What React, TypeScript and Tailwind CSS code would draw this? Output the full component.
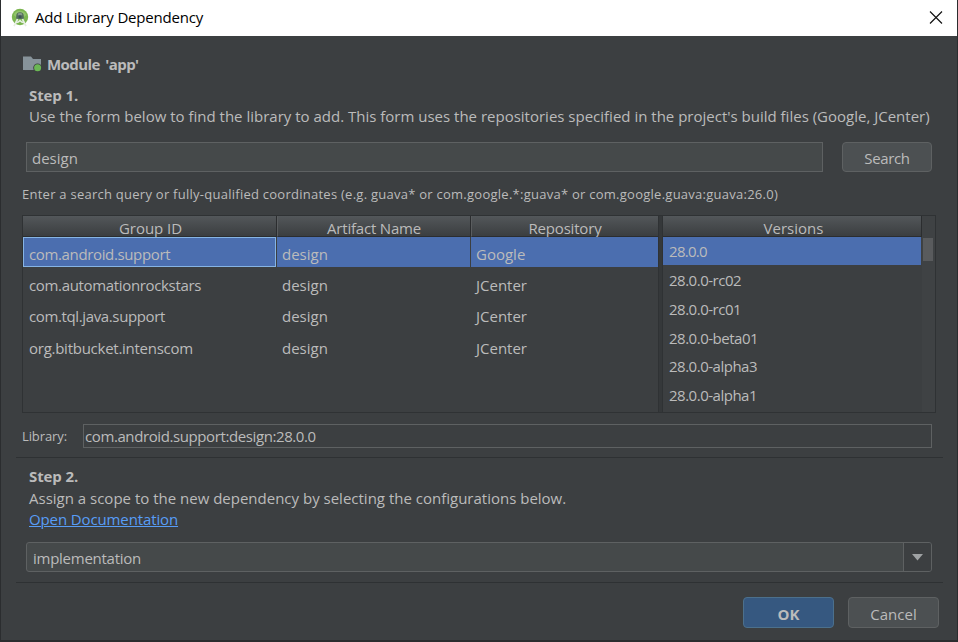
import type { ReactNode } from "react";

type Row = { group: string; artifact: string; repo: string; tracking: string; height: string };

const rows: Row[] = [
  { group: "com.automationrockstars", artifact: "design", repo: "JCenter", tracking: "tracking-[-0.34px]", height: "h-[31px]" },
  { group: "com.tql.java.support", artifact: "design", repo: "JCenter", tracking: "tracking-[-0.37px]", height: "h-[31px]" },
  { group: "org.bitbucket.intenscom", artifact: "design", repo: "JCenter", tracking: "tracking-[-0.26px]", height: "h-[32px]" },
];

const versions = [
  { name: "28.0.0-rc02", height: "h-[29px]" },
  { name: "28.0.0-rc01", height: "h-[29px]" },
  { name: "28.0.0-beta01", height: "h-[29px]" },
  { name: "28.0.0-alpha3", height: "h-[28px]" },
  { name: "28.0.0-alpha1", height: "h-[29px]" },
];

function HeaderCell({ className, children }: { className: string; children: ReactNode }) {
  return (
    <div className={`flex h-[21px] items-center justify-center border-b border-[#2b2d2f] bg-linear-to-b from-[#53575a] to-[#3b3e40] pt-[3px] leading-5 ${className}`}>
      {children}
    </div>
  );
}

function Divider() {
  return <div className="ml-[15px] h-px w-[927px] shrink-0 bg-[#2e3133]" />;
}

function StudioLogo() {
  return (
    <svg className="h-[20px] w-[18px]" viewBox="0 0 18 20">
      <circle cx="9" cy="9" r="8.2" fill="#7cb650" />
      <path d="M2.6 7A7 7 0 0 1 15.4 7L13 9H5Z" fill="#93c56c" />
      <path d="M5.2 8a3.8 3.8 0 0 1 7.6 0v3H5.2Z" fill="#55705c" />
      <path d="M6.6 7.2a2.4 2.4 0 0 1 4.8 0Z" fill="#87988c" />
      <circle cx="9" cy="8.7" r="1.5" fill="#3f5158" />
      <path d="M6.6 11 3 18.2M11.4 11 15 18.2" fill="none" stroke="#e6eee2" strokeWidth="1.7" />
      <path d="M4.6 14.5Q7 15 9 12.5 11 15 13.4 14.5" fill="none" stroke="#e6eee2" strokeWidth="1.5" />
    </svg>
  );
}

function ModuleIcon() {
  return (
    <svg className="h-[17px] w-[20px]" viewBox="0 0 20 17">
      <path d="M0 .5h8l2 2.5h8V14H0Z" fill="#87939a" />
      <circle cx="14.6" cy="11.8" r="4.4" fill="#3c3f41" />
      <circle cx="14.6" cy="11.8" r="3.5" fill="#6bb854" />
    </svg>
  );
}

export default function App() {
  return (
    <div className="flex h-[642px] w-[958px] flex-col overflow-hidden bg-[#2b2d2f] font-['Open_Sans','Noto_Sans',sans-serif] text-[15px] whitespace-nowrap text-[#bbbbbb]">
      <div className="mx-px flex h-9 shrink-0 items-center bg-white pl-[10px] text-black">
        <StudioLogo />
        <span className="ml-[6px] pb-px tracking-[-0.18px]">Add Library Dependency</span>
        <svg className="mr-[14px] ml-auto h-[14px] w-[14px]" viewBox="0 0 14 14">
          <path d="M1 .5 13 12.5M13 .5 1 12.5" fill="none" stroke="#111" strokeWidth="1.15" />
        </svg>
      </div>

      <div className="mx-px flex h-[604px] shrink-0 flex-col bg-[#3c3f41]">
        <div className="flex h-[50px] items-center pt-[6px] pl-[22px] font-bold">
          <ModuleIcon />
          <span className="ml-[4px] tracking-[-0.55px] [word-spacing:2px]">Module 'app'</span>
        </div>
        <div className="flex h-[19px] items-center pl-[28px] font-bold tracking-[-0.1px]">Step 1.</div>
        <div className="flex h-[22px] items-center pl-[28px]">
          Use the form below to find the library to add. This form uses the repositories specified in the project's build files (Google, JCenter)
        </div>

        <div className="mt-[15px] flex h-[30px] shrink-0 items-center">
          <div className="ml-[25px] flex h-[30px] w-[797px] items-center border border-[#5e6162] bg-[#45494a] pt-[2px] pl-[5px]">design</div>
          <button className="ml-[19px] h-[30px] w-[90px] rounded-[4px] border border-[#5e6162] bg-[#4c5052] pt-[3px] leading-[25px] tracking-[-0.35px]">Search</button>
        </div>

        <div className="flex h-[43px] shrink-0 items-center pt-[3px] pl-[21px] text-[13px] tracking-[0.256px]">
          <span>Enter a search query or fully-qualified coordinates (e.g. guava* or com.google.*:guava* or com.google.guava:guava:26.0)</span>
        </div>

        <div className="ml-[21px] flex h-[198px] w-[914px] shrink-0 border border-[#2f3234]">
          <div className="flex w-[635px] shrink-0 flex-col">
            <div className="flex">
              <HeaderCell className="w-[254px] border-r pl-[2px] tracking-[-0.05px]">Group ID</HeaderCell>
              <HeaderCell className="w-[194px] border-r border-l border-l-[#5a5d5f] tracking-[-0.2px]">Artifact Name</HeaderCell>
              <HeaderCell className="w-[187px] border-l border-l-[#5a5d5f] tracking-[-0.18px]">Repository</HeaderCell>
            </div>
            <div className="flex h-[30px] bg-[#4b6eaf]">
              <div className="flex w-[253px] items-center border border-[#86b4e4] pt-[4px] pl-[5px] tracking-[-0.36px]">com.android.support</div>
              <div className="flex w-[195px] items-center border-r border-l border-[#3c3f41] pt-[5px] pl-[5px]">design</div>
              <div className="flex items-center pt-[5px] pl-[5px]">Google</div>
            </div>
            <div className="pt-[3px]">
              {rows.map((row) => (
                <div key={row.group} className={`flex items-center ${row.height}`}>
                  <div className={`w-[253px] pl-[6px] ${row.tracking}`}>{row.group}</div>
                  <div className="w-[195px] pl-[6px]">{row.artifact}</div>
                  <div className="pl-[5px]">{row.repo}</div>
                </div>
              ))}
            </div>
          </div>

          <div className="w-[5px] shrink-0 border-x border-[#2f3234] bg-[#35383a]" />

          <div className="w-[259px] shrink-0">
            <HeaderCell className="border-r pl-[3px]">Versions</HeaderCell>
            <div className="mr-px flex h-[28px] items-center bg-[#4b6eaf] pl-[6px] tracking-[-0.7px]">28.0.0</div>
            <div>
              {versions.map((version) => (
                <div key={version.name} className={`flex items-center pt-px pl-[6px] tracking-[-0.49px] ${version.height}`}>
                  {version.name}
                </div>
              ))}
            </div>
          </div>
          <div className="flex-1 bg-[#3f4244] pt-[22px]">
            <div className="ml-px h-[23px] w-[10px] bg-[#595b5d]" />
          </div>
        </div>

        <div className="mt-[11px] flex h-[24px] shrink-0 items-center">
          <div className="w-[61px] pt-[2px] pl-[21px] text-[13px] tracking-[-0.1px]">Library:</div>
          <div className="ml-[21px] flex h-[24px] w-[849px] items-center border border-[#5e6162] pt-px pl-px tracking-[-0.4px]">com.android.support:design:28.0.0</div>
        </div>

        <div className="h-[9px] shrink-0" />
        <Divider />

        <div className="flex h-[30px] shrink-0 items-center pt-[6px] pl-[28px] font-bold tracking-[-0.1px]">Step 2.</div>
        <div className="flex h-[21px] shrink-0 items-center pl-[28px]">Assign a scope to the new dependency by selecting the configurations below.</div>
        <div className="flex h-[22px] shrink-0 items-center pb-[2px] pl-[28px] tracking-[-0.12px]">
          <a className="text-[#589df6] underline decoration-1 underline-offset-1">Open Documentation</a>
        </div>

        <div className="mt-[11px] ml-[25px] flex h-[30px] w-[906px] shrink-0 rounded-[3px] border border-[#5e6162] bg-[#45494a]">
          <div className="flex flex-1 items-center pt-[3px] pl-[6px] tracking-[-0.26px]">implementation</div>
          <div className="flex w-[28px] items-center justify-center rounded-r-[2px] border-l border-[#5e6162] bg-[#3c3f41]">
            <svg className="h-[7px] w-[11px]" viewBox="0 0 11 7">
              <path d="M0 0h11L5.5 6.5Z" fill="#9fa2a4" />
            </svg>
          </div>
        </div>

        <div className="h-[10px] shrink-0" />
        <Divider />

        <div className="mt-[14px] flex justify-end gap-[14px] pr-[18px]">
          <button className="h-[31px] w-[91px] rounded-[4px] border border-[#4c708c] bg-[#365880] pt-[3px] leading-[26px] font-bold">OK</button>
          <button className="h-[31px] w-[91px] rounded-[4px] border border-[#5e6162] bg-[#4c5052] pt-[3px] leading-[26px]">Cancel</button>
        </div>
      </div>
    </div>
  );
}
